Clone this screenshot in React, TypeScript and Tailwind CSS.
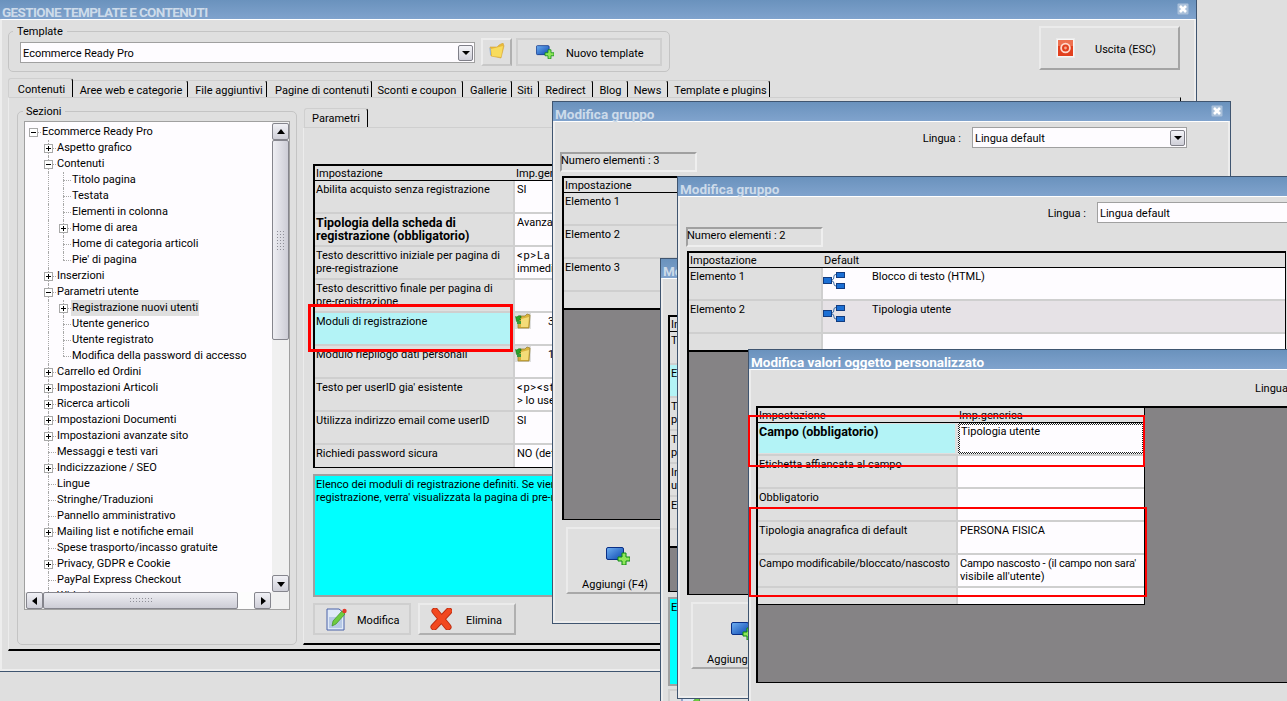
import React from "react";

const FONT = "font-['Roboto',sans-serif]";

function Close() {
  return (
    <svg width="12" height="12" viewBox="0 0 12 12" className="shrink-0">
      <rect x="0.5" y="0.5" width="11" height="11" rx="1" fill="#a9c0da" />
      <path d="M3 3 L9 9 M9 3 L3 9" stroke="#ffffff" strokeWidth="2.6" />
    </svg>
  );
}

function Arrow({ dir }: { dir: "up" | "down" | "left" | "right" }) {
  const p = { up: "1,7 9,7 5,2", down: "1,3 9,3 5,8", left: "7,1 7,9 2,5", right: "3,1 3,9 8,5" }[dir];
  return (
    <svg width="10" height="10" viewBox="0 0 10 10">
      <polygon points={p} fill="#000" />
    </svg>
  );
}

function ScrollBtn({ dir, className = "w-[17px] h-[17px]" }: { dir: "up" | "down" | "left" | "right"; className?: string }) {
  return (
    <div className={`${className} shrink-0 flex items-center justify-center rounded-[2px] border border-[#85858d] bg-gradient-to-b from-[#f1f1f6] to-[#cfcfd8]`}>
      <Arrow dir={dir} />
    </div>
  );
}

function ComboBtn() {
  return (
    <div className="ml-auto mr-[1px] w-[15px] h-[16px] shrink-0 flex items-center justify-center rounded-[2px] border border-[#7f7f88] bg-gradient-to-b from-[#f4f4f8] to-[#cfcfd8]">
      <svg width="8" height="8" viewBox="0 0 8 8">
        <polygon points="0,2 8,2 4,6" fill="#000" />
      </svg>
    </div>
  );
}

function PlusWin({ w, h }: { w: number; h: number }) {
  return (
    <svg width={w} height={h} viewBox="0 0 24 18" className="shrink-0">
      <defs>
        <linearGradient id="bluegrad" x1="0" y1="0" x2="1" y2="1">
          <stop offset="0" stopColor="#6fb0f2" />
          <stop offset="1" stopColor="#0b46b0" />
        </linearGradient>
      </defs>
      <rect x="0.5" y="0.5" width="17" height="12" rx="1.5" fill="url(#bluegrad)" stroke="#0a2f86" />
      <polygon points="16,6 20,6 20,10 24,10 24,14 20,14 20,18 16,18 16,14 12,14 12,10 16,10" fill="#8fe65a" stroke="#0a8a10" strokeWidth="1" />
    </svg>
  );
}

function Folder() {
  return (
    <svg width="16" height="16" viewBox="0 0 16 16" className="-mt-[2px]">
      <path d="M1 4 L2 13 L12 15 L15 3 L14 0 L10 2 L8 4 Z" fill="#e9b93a" stroke="#d4a63a" strokeWidth="0.6" />
      <path d="M2 6 L14 3 L12 14 L3 13 Z" fill="#f8dc5e" />
      <path d="M1 5 L1.6 12" stroke="#8ab2e8" strokeWidth="1" />
    </svg>
  );
}

function FolderArrow() {
  return (
    <svg width="16" height="16" viewBox="0 0 16 16" className="shrink-0">
      <rect width="16" height="16" fill="#dfdfdf" />
      <path d="M3 4 L3 15 L14 15 L15 2 L12 1 L10 3 L5 3 Z" fill="#d8b23c" stroke="#9c8330" strokeWidth="0.8" />
      <path d="M6 6 L14 4 L13 14 L6 14 Z" fill="#f4dc78" />
      <path d="M6 3 Q3 2 2 4 L0.5 3.5 L1.5 8.5 L6 6.5 L4.5 5.5 Q5 4.5 6 5 Z" fill="#2aa42c" stroke="#0d6a12" strokeWidth="0.5" />
      <rect x="2" y="8" width="4" height="3" fill="#3a9a3a" />
    </svg>
  );
}

function NodeIcon() {
  return (
    <svg width="23" height="18" viewBox="0 0 23 18" className="shrink-0">
      <path d="M9 8 Q11 8 11 4 Q11 2.5 13 2.5 M9 9 Q11 9 11 12 Q11 14 13 14" fill="none" stroke="#3c6ea8" />
      <rect x="0.5" y="5.5" width="8" height="6" fill="#1b6fd4" stroke="#123c80" />
      <rect x="13.5" y="0.5" width="8" height="5" fill="#1b6fd4" stroke="#123c80" />
      <rect x="13.5" y="11.5" width="8" height="5" fill="#1b6fd4" stroke="#123c80" />
    </svg>
  );
}

function PowerIcon() {
  return (
    <svg width="19" height="20" viewBox="0 0 19 20" className="shrink-0">
      <rect x="0.5" y="0.5" width="18" height="19" fill="#f6f6f6" stroke="#eaeaea" />
      <rect x="2" y="2" width="15" height="16" fill="#e2401e" />
      <rect x="2" y="2" width="15" height="6" fill="#ee7150" />
      <circle cx="9.5" cy="10" r="4.4" fill="#e2401e" stroke="#ffd9cc" strokeWidth="1.8" />
      <circle cx="9.5" cy="10" r="1.4" fill="#f7a78e" />
    </svg>
  );
}

function PencilDoc() {
  return (
    <svg width="21" height="23" viewBox="0 0 21 23" className="shrink-0">
      <path d="M1 1 H13 L18 5 V22 H1 Z" fill="#dfe9f7" stroke="#4a63a8" />
      <rect x="3" y="9" width="13" height="11" fill="#b7c9e6" />
      <path d="M6 18 L7 13 L16 3 L19 6 L10 16 Z" fill="#6ecb3f" stroke="#3d9127" strokeWidth="0.7" />
      <circle cx="18.5" cy="3" r="2.2" fill="#e2392a" />
    </svg>
  );
}

function RedX() {
  return (
    <svg width="22" height="22" viewBox="0 0 22 22" className="shrink-0">
      <path d="M5 3 L18 19 M19 3 L4 19" stroke="#b82a10" strokeWidth="7" strokeLinecap="round" />
      <path d="M5 3 L18 19 M19 3 L4 19" stroke="#f2481f" strokeWidth="5.4" strokeLinecap="round" />
    </svg>
  );
}

function Win({ pos, title, focused, close, titleClass = "", children }: { pos: string; title: string; focused?: boolean; close?: boolean; titleClass?: string; children: React.ReactNode }) {
  return (
    <div className={`absolute ${pos} flex flex-col border border-[#3f5570] bg-[#dfdfdf]`}>
      <div className="relative h-[19px] shrink-0 flex items-center pl-[2px] pt-[5px] bg-gradient-to-b from-[#6a92bd] to-[#80a3cd]">
        <span className={`font-['Roboto',sans-serif] font-bold text-[13.5px] leading-[14px] whitespace-nowrap ${titleClass} ${focused ? "text-white" : "text-[#cddbea]"}`}>{title}</span>
        {close ? (
          <div className="absolute right-[7px] top-[3px]">
            <Close />
          </div>
        ) : null}
      </div>
      <div className="flex-1 min-h-0 flex flex-col border-t border-t-white border-x-2 border-x-[#ededed] border-b-2 border-b-[#ededed]">{children}</div>
    </div>
  );
}

function Row({ col1, h = "h-[33px]", label, labelClass = "", value, valueClass = "bg-[#fefcff]", last }: { col1: string; h?: string; label?: React.ReactNode; labelClass?: string; value?: React.ReactNode; valueClass?: string; last?: boolean }) {
  return (
    <div className={`flex ${h} shrink-0 ${last ? "" : "border-b-2 border-b-[#cfcfcf]"}`}>
      <div className={`${col1} shrink-0 pl-[1px] pt-[2px] whitespace-nowrap ${labelClass}`}>{label}</div>
      <div className={`flex-1 min-w-0 border-l-2 border-l-[#cfcfcf] whitespace-nowrap overflow-hidden ${valueClass}`}>{value}</div>
    </div>
  );
}

function Head({ col1, a, b }: { col1: string; a: string; b?: string }) {
  return (
    <div className="flex h-[15px] shrink-0 border-b border-b-black">
      <div className={`${col1} shrink-0 pl-[1px] pt-[1px]`}>{a}</div>
      <div className="pl-[3px] pt-[1px]">{b}</div>
    </div>
  );
}

const V = "pl-[2px] pt-[2px]";
const BOLD = "font-bold text-[12.5px]";

function Gray() {
  return <div className="flex-1 bg-[#858385] border-t-2 border-t-black" />;
}

function Lingua({ box = "w-[215px]", arrow }: { box?: string; arrow?: boolean }) {
  return (
    <>
      <span className="mr-[11px] mt-[2px] whitespace-nowrap">Lingua :</span>
      <div className={`${box} h-[21px] shrink-0 border border-[#a0a0a0] bg-[#fefcff] flex items-center pl-[2px]`}>
        <span className="mt-[2px]">Lingua default</span>
        {arrow ? <ComboBtn /> : null}
      </div>
    </>
  );
}

function Numero({ n, className }: { n: number; className: string }) {
  return (
    <div className={`${className} w-[137px] h-[20px] shrink-0 border-2 border-t-[#a0a0a0] border-l-[#a0a0a0] border-r-[#efefef] border-b-[#efefef] flex items-start whitespace-nowrap`}>
      <span className="-ml-px">Numero elementi : {n}</span>
    </div>
  );
}

function Aggiungi({ className }: { className: string }) {
  return (
    <div className={`${className} w-[98px] h-[67px] shrink-0 border-2 border-[#ebebeb] border-b-[#a8a8a8] flex flex-col items-center`}>
      <div className="mt-[18px] ml-[6px]">
        <PlusWin w={24} h={18} />
      </div>
      <span className="mt-[13px] whitespace-nowrap">Aggiungi (F4)</span>
    </div>
  );
}

type T = { d: number; t: string; x?: "+" | "-"; end?: boolean; sel?: boolean };
const tree: T[] = [
  { d: 0, t: "Ecommerce Ready Pro", x: "-" },
  { d: 1, t: "Aspetto grafico", x: "+" },
  { d: 1, t: "Contenuti", x: "-" },
  { d: 2, t: "Titolo pagina" },
  { d: 2, t: "Testata" },
  { d: 2, t: "Elementi in colonna" },
  { d: 2, t: "Home di area", x: "+" },
  { d: 2, t: "Home di categoria articoli" },
  { d: 2, t: "Pie' di pagina", end: true },
  { d: 1, t: "Inserzioni", x: "+" },
  { d: 1, t: "Parametri utente", x: "-" },
  { d: 2, t: "Registrazione nuovi utenti", x: "+", sel: true },
  { d: 2, t: "Utente generico" },
  { d: 2, t: "Utente registrato" },
  { d: 2, t: "Modifica della password di accesso", end: true },
  { d: 1, t: "Carrello ed Ordini", x: "+" },
  { d: 1, t: "Impostazioni Articoli", x: "+" },
  { d: 1, t: "Ricerca articoli", x: "+" },
  { d: 1, t: "Impostazioni Documenti", x: "+" },
  { d: 1, t: "Impostazioni avanzate sito", x: "+" },
  { d: 1, t: "Messaggi e testi vari" },
  { d: 1, t: "Indicizzazione / SEO", x: "+" },
  { d: 1, t: "Lingue" },
  { d: 1, t: "Stringhe/Traduzioni" },
  { d: 1, t: "Pannello amministrativo" },
  { d: 1, t: "Mailing list e notifiche email", x: "+" },
  { d: 1, t: "Spese trasporto/incasso gratuite" },
  { d: 1, t: "Privacy, GDPR e Cookie", x: "+" },
  { d: 1, t: "PayPal Express Checkout" },
  { d: 1, t: "Widget" },
];

function Guide({ half }: { half?: boolean }) {
  return <div className={`absolute left-[7px] top-0 w-0 border-l border-dotted border-l-[#a8a8a8] ${half ? "h-[8px]" : "h-[16px]"}`} />;
}

function TreeRow({ r }: { r: T }) {
  return (
    <div className="flex h-[16px] items-center shrink-0">
      {r.d >= 1 ? <div className="w-[15px] h-[16px] shrink-0" /> : null}
      {r.d === 2 ? (
        <div className="relative w-[15px] h-[16px] shrink-0">
          <Guide />
        </div>
      ) : null}
      <div className="relative w-[15px] h-[16px] shrink-0">
        {r.d > 0 ? <Guide half={r.end} /> : null}
        <div className="absolute left-[7px] top-[8px] w-[8px] h-0 border-t border-dotted border-t-[#a8a8a8]" />
        {r.x ? (
          <div className="absolute left-[3px] top-[4px] w-[9px] h-[9px] border border-[#a8a8a8] bg-white flex items-center justify-center">
            <svg width="7" height="7" viewBox="0 0 7 7">
              <path d={r.x === "+" ? "M1 3.5 H6 M3.5 1 V6" : "M1 3.5 H6"} stroke="#000" strokeWidth="1" />
            </svg>
          </div>
        ) : null}
      </div>
      <span className={`pl-[1px] pr-[1px] whitespace-nowrap leading-[16px] ${r.sel ? "bg-[#dfdfdf]" : ""}`}>{r.t}</span>
    </div>
  );
}

function Grip({ cols, rows }: { cols: string; rows: string }) {
  return <div className={`${cols} ${rows} bg-[radial-gradient(circle,#8f8f98_0.7px,transparent_1px)] bg-[length:3px_3px]`} />;
}

const tabs: [string, string][] = [
  ["Aree web e categorie", "w-[115px] pl-[2px]"],
  ["File aggiuntivi", "w-[79px] pl-[4px]"],
  ["Pagine di contenuti", "w-[105px] pl-[6px]"],
  ["Sconti e coupon", "w-[91px]"],
  ["Gallerie", "w-[49px] pl-[3px]"],
  ["Siti", "w-[27px]"],
  ["Redirect", "w-[54px]"],
  ["Blog", "w-[35px] pl-[1px]"],
  ["News", "w-[40px]"],
  ["Template e plugins", "w-[102px] pl-[4px]"],
];

export default function App() {
  return (
    <div className={`relative w-[1287px] h-[701px] overflow-hidden bg-[#dfdfdf] text-black text-[11px] leading-[13px] ${FONT}`}>
      {/* Main window */}
      <Win pos="left-[-1px] top-[-1px] w-[1198px] h-[673px]" title="GESTIONE TEMPLATE E CONTENUTI" titleClass="tracking-[-0.62px]" close>
        <div className="flex items-start h-[58px] shrink-0">
          <fieldset className="ml-[6px] mt-[5px] w-[662px] h-[47px] border border-[#c4c4c4] rounded-[5px]">
            <legend className="ml-[4px] px-[4px] leading-[13px]">Template</legend>
            <div className="flex items-start">
              <div className="ml-[11px] mt-[4px] w-[455px] h-[21px] border border-[#a0a0a0] bg-[#fefcff] flex items-center pl-[2px]">
                <span className="mt-[2px]">Ecommerce Ready Pro</span>
                <ComboBtn />
              </div>
              <div className="ml-[6px] w-[31px] h-[28px] border-2 border-[#ececec] border-r-[#b0b0b0] border-b-[#c8c8c8] flex items-center justify-center">
                <Folder />
              </div>
              <div className="ml-[4px] w-[146px] h-[28px] border-2 border-[#cfcfcf] flex items-center pl-[18px]">
                <PlusWin w={18} h={14} />
                <span className="ml-[12px] mt-[2px]">Nuovo template</span>
              </div>
            </div>
          </fieldset>
          <div className="ml-auto mr-[14px] mt-[6px] w-[141px] h-[44px] border-2 border-[#ebebeb] border-r-[#a4a4a4] border-b-[#a4a4a4] flex items-center pl-[15px]">
            <PowerIcon />
            <span className="ml-[20px] mt-[2px]">Uscita (ESC)</span>
          </div>
        </div>

        <div className="ml-[6px] flex items-end h-[19px] shrink-0">
          <div className="w-[65px] h-[19px] flex items-center justify-center pl-[2px] pt-[2px] border-t border-l border-t-[#cfcfcf] border-l-[#cfcfcf] border-r border-r-black rounded-t-[3px]">Contenuti</div>
          {tabs.map(([t, w]) => (
            <div key={t} className={`${w} h-[17px] flex items-center justify-center pt-[2px] border-t border-t-[#cfcfcf] border-r border-r-black rounded-tr-[3px] whitespace-nowrap`}>
              {t}
            </div>
          ))}
        </div>

        <div className="ml-[6px] w-[1173px] h-[554px] shrink-0 flex items-start pt-[7px] border-t border-t-[#cfcfcf] border-r border-r-black border-b-2 border-b-black border-l border-l-[#ececec]">
          <fieldset className="ml-[8px] w-[280px] h-[540px] shrink-0 border border-[#c4c4c4] rounded-[5px] px-[6px]">
            <legend className="-ml-px px-[3px] leading-[13px]">Sezioni</legend>
            <div className="mt-[3px] h-[489px] border border-[#a0a0a0] bg-[#fefcff] flex flex-col">
              <div className="flex flex-1 min-h-0">
                <div className="flex-1 min-w-0 pt-[2px] pl-[1px] overflow-hidden flex flex-col">
                  {tree.map((r) => (
                    <TreeRow key={r.t} r={r} />
                  ))}
                </div>
                <div className="w-[17px] shrink-0 bg-[#f0f0f0] flex flex-col pt-[1px]">
                  <ScrollBtn dir="up" />
                  <div className="h-[200px] shrink-0 rounded-[2px] border border-[#85858d] bg-gradient-to-r from-[#eeeef3] to-[#cdcdd6] flex items-center justify-center">
                    <Grip cols="w-[9px]" rows="h-[21px]" />
                  </div>
                  <div className="flex-1" />
                  <ScrollBtn dir="down" />
                </div>
              </div>
              <div className="h-[17px] shrink-0 flex pl-[1px] bg-[#f0f0f0]">
                <ScrollBtn dir="left" className="w-[17px] h-[17px]" />
                <div className="w-[195px] shrink-0 rounded-[2px] border border-[#85858d] bg-gradient-to-b from-[#eeeef3] to-[#cdcdd6] flex items-center justify-center">
                  <Grip cols="w-[24px]" rows="h-[7px]" />
                </div>
                <div className="w-[16px] shrink-0 bg-[#fdfdfd]" />
                <ScrollBtn dir="right" className="w-[17px] h-[17px]" />
              </div>
            </div>
          </fieldset>

          <div className="ml-[7px] mt-[3px] w-[870px] shrink-0 flex flex-col">
            <div className="w-[64px] h-[19px] flex items-center justify-center pt-[1px] border-t border-l border-t-[#cfcfcf] border-l-[#cfcfcf] border-r border-r-black rounded-t-[3px]">Parametri</div>
            <div className="h-[518px] pl-[9px] pt-[36px] border-t border-t-[#cfcfcf] border-b-2 border-b-black border-l border-l-[#ececec] -ml-px">
              <div className="w-[857px] border-t-2 border-l-2 border-r border-b border-black flex flex-col">
                <Head col1="w-[198px]" a="Impostazione" b="Imp.generica" />
                <Row col1="w-[198px]" label="Abilita acquisto senza registrazione" value="SI" valueClass={`bg-[#fefcff] ${V}`} />
                <Row
                  col1="w-[198px]"
                  labelClass={BOLD}
                  label={
                    <>
                      Tipologia della scheda di
                      <br />
                      registrazione (obbligatorio)
                    </>
                  }
                  value="Avanzata"
                  valueClass={`bg-[#fefcff] ${V}`}
                />
                <Row
                  col1="w-[198px]"
                  label={
                    <>
                      Testo descrittivo iniziale per pagina di
                      <br />
                      pre-registrazione
                    </>
                  }
                  value={
                    <>
                      <span className="tracking-[0.8px]">{"<p>La registrazione"}</span>
                      <br />
                      immediata
                    </>
                  }
                  valueClass={`bg-[#fefcff] ${V}`}
                />
                <Row
                  col1="w-[198px]"
                  label={
                    <>
                      Testo descrittivo finale per pagina di
                      <br />
                      pre-registrazione
                    </>
                  }
                />
                <Row
                  col1="w-[198px]"
                  label="Moduli di registrazione"
                  labelClass="bg-[#b3f3f6]"
                  value={
                    <div className="flex">
                      <FolderArrow />
                      <span className="ml-[17px] mt-[2px]">3</span>
                    </div>
                  }
                />
                <Row
                  col1="w-[198px]"
                  label="Modulo riepilogo dati personali"
                  value={
                    <div className="flex">
                      <FolderArrow />
                      <span className="ml-[17px] mt-[2px]">1</span>
                    </div>
                  }
                />
                <Row
                  col1="w-[198px]"
                  label="Testo per userID gia' esistente"
                  value={
                    <>
                      <span className="tracking-[0.8px]">{"<p><strong>"}</span>
                      <br />
                      {"> lo userID"}
                    </>
                  }
                  valueClass={`bg-[#fefcff] ${V}`}
                />
                <Row col1="w-[198px]" label="Utilizza indirizzo email come userID" value="SI" valueClass={`bg-[#fefcff] ${V}`} />
                <Row col1="w-[198px]" h="h-[22px]" last label="Richiedi password sicura" value="NO (default)" valueClass={`bg-[#fefcff] ${V}`} />
              </div>
              <div className="mt-[6px] w-[857px] h-[123px] bg-[#00ffff] border-2 border-[#a0a0a0] pl-[1px] pt-[2px] whitespace-nowrap">
                Elenco dei moduli di registrazione definiti. Se viene indicato piu' di un modulo di
                <br />
                registrazione, verra' visualizzata la pagina di pre-registrazione
              </div>
              <div className="mt-[6px] flex gap-[7px]">
                <div className="w-[98px] h-[32px] border-2 border-[#cfcfcf] flex items-center pl-[11px]">
                  <PencilDoc />
                  <span className="ml-[10px] mt-[2px]">Modifica</span>
                </div>
                <div className="w-[98px] h-[32px] border-2 border-[#ebebeb] border-r-[#b0b0b0] border-b-[#b0b0b0] flex items-center pl-[10px]">
                  <RedX />
                  <span className="ml-[14px] mt-[2px]">Elimina</span>
                </div>
              </div>
            </div>
          </div>
        </div>
      </Win>

      {/* Window 2 */}
      <Win pos="left-[552px] top-[101px] w-[679px] h-[523px]" title="Modifica gruppo" close>
        <div className="flex items-center justify-end pt-[5px] pr-[41px] h-[26px] shrink-0">
          <Lingua arrow />
        </div>
        <Numero n={3} className="ml-[5px] mt-[4px]" />
        <div className="ml-[7px] mt-[4px] w-[599px] h-[344px] shrink-0 border-t-2 border-l-2 border-r border-b border-black flex flex-col">
          <Head col1="w-[198px]" a="Impostazione" />
          <Row col1="w-[198px]" label="Elemento 1" />
          <Row col1="w-[198px]" label="Elemento 2" />
          <Row col1="w-[198px]" label="Elemento 3" />
          <Row col1="w-[198px]" h="h-[16px]" last />
          <Gray />
        </div>
        <Aggiungi className="ml-[11px] mt-[7px]" />
      </Win>

      {/* Window 3 */}
      <Win pos="left-[660px] top-[258px] w-[679px] h-[520px]" title="Modifica gruppo">
        <div className="ml-[5px] mt-[36px] w-[599px] h-[277px] shrink-0 border-t-2 border-l-2 border-r border-b border-black flex flex-col">
          <Head col1="w-[198px]" a="Impostazione" />
          <Row col1="w-[198px]" label="Titolo" />
          <Row col1="w-[198px]" labelClass="bg-[#b3f3f6]" label="Etichetta" />
          <Row
            col1="w-[198px]"
            label={
              <>
                Testo
                <br />
                pre
              </>
            }
          />
          <Row
            col1="w-[198px]"
            label={
              <>
                Testo
                <br />
                pre
              </>
            }
          />
          <Row
            col1="w-[198px]"
            label={
              <>
                Indirizzo
                <br />
                url
              </>
            }
          />
          <Row col1="w-[198px]" label="Elemento" />
          <Row col1="w-[198px]" h="h-[16px]" last />
          <Gray />
        </div>
        <div className="ml-[5px] mt-[5px] w-[599px] h-[89px] shrink-0 bg-[#00ffff] border-2 border-[#a0a0a0] pl-[1px] pt-[2px]">Elenco</div>
        <div className="ml-[5px] mt-[3px] w-[98px] h-[32px] shrink-0 border-2 border-[#cfcfcf] flex items-center pl-[11px]">
          <PencilDoc />
          <span className="ml-[10px] mt-[2px]">Modifica</span>
        </div>
      </Win>

      {/* Window 4 */}
      <Win pos="left-[677px] top-[176px] w-[679px] h-[523px]" title="Modifica gruppo">
        <div className="flex items-center justify-end pt-[5px] pr-[41px] h-[26px] shrink-0">
          <Lingua arrow />
        </div>
        <Numero n={2} className="ml-[6px] mt-[4px]" />
        <div className="ml-[7px] mt-[4px] w-[599px] h-[344px] shrink-0 border-t-2 border-l-2 border-r border-b border-black flex flex-col">
          <Head col1="w-[132px]" a="Impostazione" b="Default" />
          <Row
            col1="w-[132px]"
            label="Elemento 1"
            value={
              <div className="flex pt-[4px]">
                <NodeIcon />
                <span className="ml-[26px] -mt-[2px]">Blocco di testo (HTML)</span>
              </div>
            }
          />
          <Row
            col1="w-[132px]"
            label="Elemento 2"
            valueClass="bg-[#e6e2e6]"
            value={
              <div className="flex pt-[4px]">
                <NodeIcon />
                <span className="ml-[26px] -mt-[2px]">Tipologia utente</span>
              </div>
            }
          />
          <Row col1="w-[132px]" h="h-[16px]" last />
          <Gray />
        </div>
        <Aggiungi className="ml-[11px] mt-[7px]" />
      </Win>

      {/* Window 5 */}
      <Win pos="left-[748px] top-[349px] w-[679px] h-[400px]" title="Modifica valori oggetto personalizzato" focused>
        <div className="flex items-center pl-[504px] pt-[6px] h-[28px] shrink-0">
          <Lingua />
        </div>
        <div className="ml-[5px] mt-[8px] w-[650px] h-[277px] shrink-0 border-t-2 border-l-2 border-b border-black bg-[#858385]">
          <div className="w-[387px] h-[197px] border-r border-b border-black bg-[#dfdfdf] flex flex-col">
            <Head col1="w-[198px]" a="Impostazione" b="Imp.generica" />
            <div className="flex h-[33px] shrink-0 border-b-2 border-b-[#cfcfcf]">
              <div className={`w-[198px] shrink-0 pt-[1px] bg-[#b3f3f6] border border-[#dfdfdf] ${BOLD}`}>Campo (obbligatorio)</div>
              <div className="flex-1 min-w-0 ml-[2px] p-[2px] bg-[repeating-conic-gradient(#222_0_25%,#fff_0_50%)] bg-[length:2px_2px]">
                <div className="h-full bg-[#fefcff] pl-[1px]">Tipologia utente</div>
              </div>
            </div>
            <Row col1="w-[198px]" label="Etichetta affiancata al campo" />
            <Row col1="w-[198px]" label="Obbligatorio" />
            <Row col1="w-[198px]" label="Tipologia anagrafica di default" value="PERSONA FISICA" valueClass={`bg-[#fefcff] ${V}`} />
            <Row
              col1="w-[198px]"
              label={<span className="tracking-[-0.12px]">Campo modificabile/bloccato/nascosto</span>}
              value={
                <>
                  <span className="tracking-[-0.22px]">Campo nascosto - (il campo non sara'</span>
                  <br />
                  visibile all'utente)
                </>
              }
              valueClass={`bg-[#fefcff] ${V}`}
            />
            <Row col1="w-[198px]" h="h-[16px]" last />
          </div>
        </div>
      </Win>

      {/* Red annotation rectangles */}
      <div className="absolute left-[308px] top-[304px] w-[205px] h-[48px] border-[3px] border-[#ff0000]" />
      <div className="absolute left-[748px] top-[415px] w-[397px] h-[52px] border-2 border-[#ff0000]" />
      <div className="absolute left-[749px] top-[507px] w-[398px] h-[90px] border-2 border-[#ff0000]" />
    </div>
  );
}
